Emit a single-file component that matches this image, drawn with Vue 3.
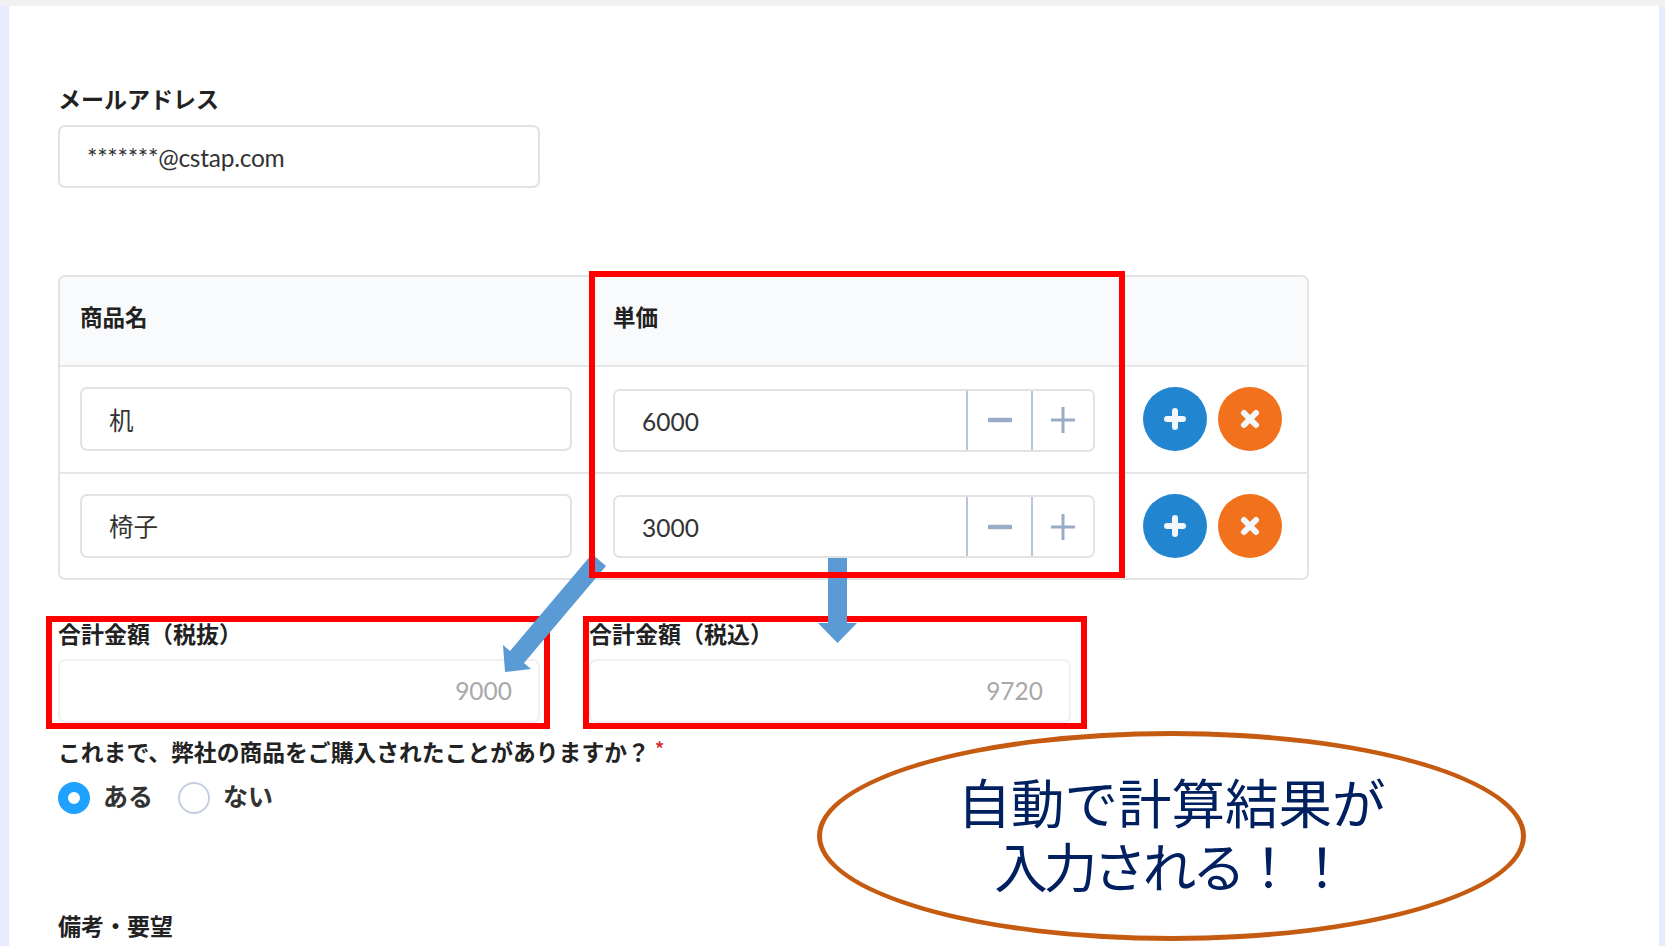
<template>
  <div class="page">
    <div class="topbar"></div>
    <main class="sheet">
      <label class="label email-label" for="email">メールアドレス</label>
      <input id="email" class="field email" type="text" value="*******@cstap.com" />

      <section class="table">
        <div class="row head">
          <div class="cell">商品名</div>
          <div class="cell">単価</div>
          <div class="cell"></div>
        </div>
        <div class="row" v-for="(item, i) in items" :key="item.id">
          <div class="cell">
            <input class="field name" type="text" v-model="item.name" />
          </div>
          <div class="cell">
            <div class="stepper">
              <input class="stepper-input" type="text" v-model.number="item.price" />
              <button class="step" type="button" @click="item.price -= 1">
                <svg width="26" height="26" viewBox="0 0 26 26"><path d="M1 13h24" class="step-minus" /></svg>
              </button>
              <button class="step" type="button" @click="item.price += 1">
                <svg width="26" height="28" viewBox="0 0 26 28"><path d="M1 14h24M13 1v26" class="step-plus" /></svg>
              </button>
            </div>
          </div>
          <div class="cell actions">
            <button class="round add" type="button" @click="addRow(i)">
              <svg width="22" height="22" viewBox="0 0 22 22"><path d="M11 3v16M3 11h16" /></svg>
            </button>
            <button class="round remove" type="button" @click="removeRow(i)">
              <svg width="22" height="22" viewBox="0 0 22 22"><path d="M5 5l12 12M17 5L5 17" /></svg>
            </button>
          </div>
        </div>
      </section>

      <div class="totals">
        <div class="total">
          <div class="label">合計金額（税抜）</div>
          <input class="field readonly" type="text" readonly :value="subtotal" />
        </div>
        <div class="total">
          <div class="label">合計金額（税込）</div>
          <input class="field readonly" type="text" readonly :value="taxed" />
        </div>
      </div>

      <div class="label question">これまで、弊社の商品をご購入されたことがありますか？<span class="required">*</span></div>
      <div class="radios">
        <label class="radio" v-for="opt in options" :key="opt">
          <input type="radio" name="bought" :value="opt" v-model="bought" />
          <span>{{ opt }}</span>
        </label>
      </div>

      <div class="label notes">備考・要望</div>
    </main>

    <!-- annotations drawn over the form -->
    <svg class="marks" width="1665" height="946" viewBox="0 0 1665 946">
      <rect class="box" x="49" y="619" width="498" height="107" />
      <rect class="box" x="586" y="619" width="498" height="107" />
      <polygon class="arrow" points="592,554 606,566 524,663 531,669 505,672 503,645 510,651" />
      <polygon class="arrow" points="828,558 847,558 847,623 857,623 837.5,643 818,623 828,623" />
      <rect class="box" x="592" y="274" width="530" height="301" />
    </svg>
    <div class="bubble">自動で計算結果が<br /><span class="tight">入力される</span>！！</div>
  </div>
</template>

<script setup>
import { ref, computed } from "vue";

const items = ref([
  { id: 1, name: "机", price: 6000 },
  { id: 2, name: "椅子", price: 3000 },
]);
const options = ["ある", "ない"];
const bought = ref("ある");

let nextId = 3;

const subtotal = computed(() =>
  items.value.reduce((sum, item) => sum + Number(item.price || 0), 0)
);
const taxed = computed(() => Math.round(subtotal.value * 1.08));

const addRow = (i) => {
  items.value.splice(i + 1, 0, { id: nextId++, name: "", price: 0 });
};
const removeRow = (i) => {
  items.value.splice(i, 1);
};
</script>

<style>
html,
body {
  margin: 0;
}
</style>

<style scoped>
.page {
  position: relative;
  display: flex;
  flex-direction: column;
  width: 1665px;
  height: 946px;
  overflow: hidden;
  background: #e8edfd;
  font-family: Lato, "Noto Sans CJK JP", sans-serif;
  color: #222;
}

.topbar {
  height: 6px;
  flex: none;
  background: #f1f1f1;
}

.sheet {
  flex: 1;
  margin: 0 6px 0 9px;
  padding: 79px 0 0 49px;
  background: #fff;
}

.label {
  display: block;
  font-family: "Noto Sans CJK JP", sans-serif;
  font-size: 23px;
  font-weight: 700;
  line-height: 26px;
  color: #222;
}

.email-label {
  margin-bottom: 14px;
}

.field {
  box-sizing: border-box;
  display: block;
  height: 63px;
  padding: 0 27px;
  border: 2px solid #e2e2e2;
  border-radius: 7px;
  outline: none;
  background: #fff;
  font-family: Lato, "Noto Sans CJK JP", sans-serif;
  font-size: 24.5px;
  color: #333;
}

.email {
  width: 482px;
  padding-top: 2px;
  letter-spacing: -0.25px;
}

.table {
  box-sizing: border-box;
  width: 1251px;
  margin-top: 87px;
  border: 2px solid #e2e3e5;
  border-radius: 7px;
  overflow: hidden;
}

.row {
  display: grid;
  grid-template-columns: 533px 532px 1fr;
  height: 106.5px;
  border-top: 2px solid #e6e7e9;
  box-sizing: border-box;
}

.head {
  height: 88px;
  border-top: none;
  background: #f9fafc;
}

.cell {
  display: flex;
  align-items: center;
  padding: 0 20px;
}

.head .cell {
  padding-bottom: 10px;
  font-family: "Noto Sans CJK JP", sans-serif;
  font-size: 22.5px;
  font-weight: 700;
}

.name {
  width: 492px;
  height: 64px;
}

.stepper {
  display: flex;
  box-sizing: border-box;
  width: 482px;
  height: 63px;
  margin-top: 2px;
  border: 2px solid #e2e2e2;
  border-radius: 7px;
  overflow: hidden;
}

.stepper-input {
  flex: 1;
  min-width: 0;
  padding: 2px 27px 0;
  border: none;
  outline: none;
  font-family: Lato, sans-serif;
  font-size: 24.5px;
  color: #333;
}

.step {
  display: flex;
  align-items: center;
  justify-content: center;
  width: 65px;
  padding: 0;
  border: none;
  border-left: 2px solid #b9c6d8;
  background: #fff;
}

.step:last-child {
  width: 62px;
}

.step-minus {
  stroke: #9aabc6;
  stroke-width: 4.5;
  fill: none;
}

.step-plus {
  stroke: #9aabc6;
  stroke-width: 3;
  fill: none;
}

.actions {
  gap: 11px;
  padding: 0 0 0 18px;
}

.round {
  display: flex;
  align-items: center;
  justify-content: center;
  width: 64px;
  height: 64px;
  padding: 0;
  border: none;
  border-radius: 50%;
}

.round svg path {
  fill: none;
  stroke: #f2f7fc;
  stroke-width: 6;
  stroke-linecap: round;
}

.add {
  background: #2185d0;
}

.remove {
  background: #f2711c;
}

.totals {
  display: flex;
  gap: 49px;
  margin-top: 40px;
}

.total .label {
  margin-bottom: 13px;
}

.readonly {
  width: 482px;
  height: 64px;
  padding-right: 26px;
  padding-bottom: 2px;
  border-color: #f0f0f0;
  text-align: right;
  color: #a8a8a8;
}

.question {
  margin-top: 16px;
  font-size: 22.8px;
}

.required {
  position: relative;
  top: -4px;
  margin-left: 5px;
  font-size: 20px;
  font-weight: 500;
  color: #db2828;
}

.radios {
  display: flex;
  gap: 25px;
  margin-top: 16px;
}

.radio {
  display: flex;
  align-items: center;
  gap: 13px;
  font-family: "Noto Sans CJK JP", sans-serif;
  font-size: 25px;
  font-weight: 700;
  line-height: 32px;
  color: #333;
}

.radio span {
  margin-top: -7px;
}

.radio input {
  appearance: none;
  box-sizing: border-box;
  width: 32px;
  height: 32px;
  margin: 0;
  border: 2px solid #c3cfe0;
  border-radius: 50%;
  background: #fff;
}

.radio input:checked {
  border: 10px solid #1fa2ff;
}

.notes {
  margin-top: 98px;
}

.marks {
  position: absolute;
  top: 0;
  left: 0;
  pointer-events: none;
}

.box {
  fill: none;
  stroke: #ff0000;
  stroke-width: 6;
}

.arrow {
  fill: #5b9bd5;
}

.bubble {
  position: absolute;
  top: 731px;
  left: 817px;
  box-sizing: border-box;
  width: 709px;
  height: 210px;
  padding-top: 33px;
  border: 5px solid #c55a11;
  border-radius: 50%;
  background: #fff;
  font-family: "Noto Sans CJK JP", sans-serif;
  font-size: 53.5px;
  line-height: 64px;
  text-align: center;
  color: #002060;
}

.tight {
  letter-spacing: -4px;
}
</style>
